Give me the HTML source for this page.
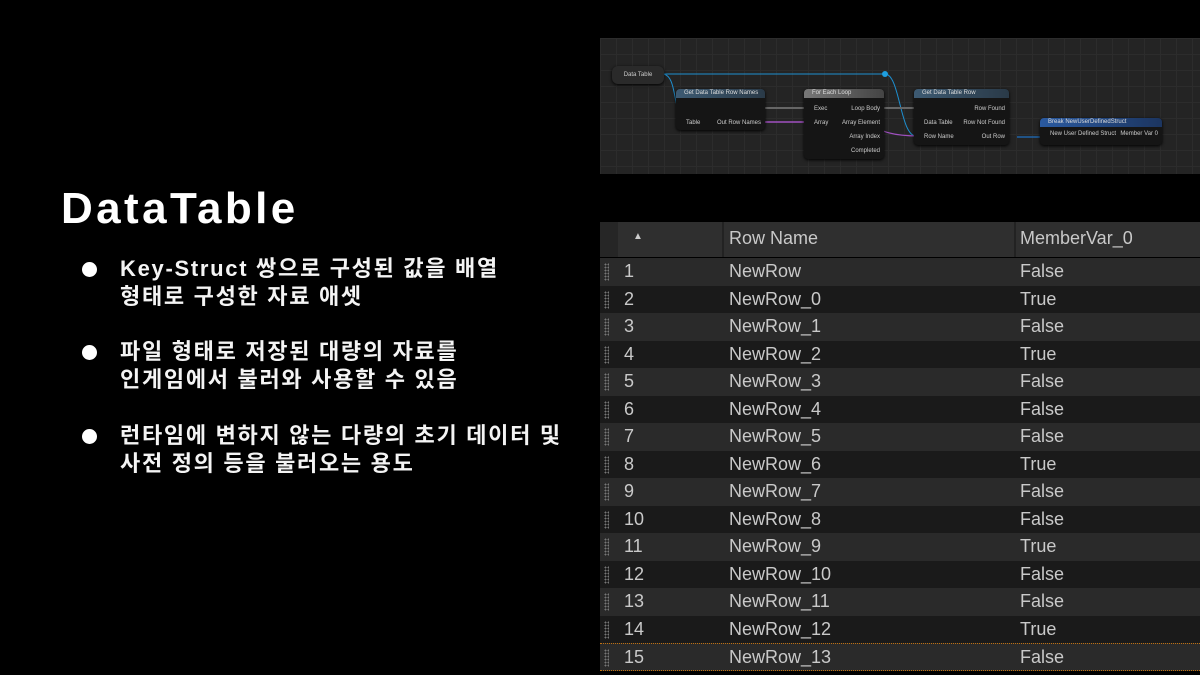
<!DOCTYPE html>
<html><head><meta charset="utf-8"><style>
*{margin:0;padding:0;box-sizing:border-box}
body{width:1200px;height:675px;background:#000;position:relative;overflow:hidden;font-family:"Liberation Sans","Noto Sans CJK KR",sans-serif;color:#fff}
h1{position:absolute;left:61px;top:184px;font-size:44px;font-weight:bold;letter-spacing:3.4px}
.b{position:absolute;left:120px;font-size:22px;line-height:28px;font-weight:bold;color:#f4f4f4;letter-spacing:1.7px;white-space:nowrap}
.dot{position:absolute;left:82px;width:15px;height:15px;border-radius:50%;background:#fff}
.g{position:absolute;left:600px;top:38px;width:600px;height:136px;background-color:#242424;background-image:linear-gradient(#2c2c2c 1px,transparent 1px),linear-gradient(90deg,#2c2c2c 1px,transparent 1px);background-size:16px 16px;overflow:hidden}
.n{position:absolute;background:#151515;border-radius:4px;box-shadow:0 1px 3px #000;font-size:6px;color:#ccc}
.n .h{height:9px;background:linear-gradient(90deg,#3d5a72,#2a3a48);border-radius:4px 4px 0 0;padding-left:8px;line-height:9px;color:#ddd}
.n .hg{background:linear-gradient(90deg,#777,#444)}
.n .hb{background:linear-gradient(90deg,#2a5aa0,#1c3560)}
.t{position:absolute;left:600px;top:222px;width:600px;height:453px;font-family:"Liberation Sans Narrow","Liberation Sans",sans-serif;font-size:18px;color:#c9c9c9}
.hd{position:absolute;top:0;left:0;width:600px;height:35px;background:#2f2f2f}
.r{position:absolute;left:0;width:600px;height:27.5px;line-height:27.5px}
.r span,.hd span{position:absolute}
.a{background:#2a2a2a}.c{background:#1a1a1a}
.r i{position:absolute;left:4px;top:5px;width:5px;height:18px;background-image:radial-gradient(#777 0.8px,transparent 1px);background-size:3px 3px}
.r .x{left:24px}.r .y{left:129px}.r .z{left:420px}
</style></head><body>
<h1>DataTable</h1>
<div class="dot" style="top:262px"></div>
<div class="b" style="top:255px">Key-Struct 쌍으로 구성된 값을 배열<br>형태로 구성한 자료 애셋</div>
<div class="dot" style="top:345px"></div>
<div class="b" style="top:338px">파일 형태로 저장된 대량의 자료를<br>인게임에서 불러와 사용할 수 있음</div>
<div class="dot" style="top:429px"></div>
<div class="b" style="top:422px">런타임에 변하지 않는 다량의 초기 데이터 및<br>사전 정의 등을 불러오는 용도</div>

<div class="g">
<svg width="600" height="136" style="position:absolute;left:0;top:0">
<path d="M62 36 C80 36 70 36 285 36 C300 36 300 98 316 98" stroke="#1e8fd0" fill="none" stroke-width="1"/>
<path d="M62 36 C80 36 70 84 90 84" stroke="#1e8fd0" fill="none"/>
<path d="M165 70 L206 70 M258 70 L318 70" stroke="#666" fill="none" stroke-width="2"/>
<path d="M165 84 L206 84" stroke="#a050c0" stroke-width="1.5"/>
<path d="M258 84 C275 84 275 98 318 98" stroke="#a050c0" fill="none" stroke-width="1.2"/>
<path d="M417 99 L440 99" stroke="#1e6fc0" stroke-width="1.2"/>
<circle cx="60" cy="36" r="2.5" fill="#1e9fe0"/><circle cx="285" cy="36" r="3" fill="#1e9fe0"/>
</svg>
<div class="n" style="left:12px;top:28px;width:52px;height:18px;border-radius:6px;background:#2a2a2a;text-align:center;line-height:18px">Data Table</div>
<div class="n" style="left:76px;top:51px;width:89px;height:41px"><div class="h">Get Data Table Row Names</div><div style="padding:4px 4px 0 10px;line-height:14px">&nbsp;<br>Table<span style="float:right">Out Row Names</span></div></div>
<div class="n" style="left:204px;top:51px;width:80px;height:70px"><div class="h hg">For Each Loop</div><div style="padding:4px 4px 0 10px;line-height:14px">Exec<span style="float:right">Loop Body</span><br>Array<span style="float:right">Array Element</span><br><span style="float:right">Array Index</span><br><span style="float:right">Completed</span></div></div>
<div class="n" style="left:314px;top:51px;width:95px;height:56px"><div class="h">Get Data Table Row</div><div style="padding:4px 4px 0 10px;line-height:14px">&nbsp;<span style="float:right">Row Found</span><br>Data Table<span style="float:right">Row Not Found</span><br>Row Name<span style="float:right">Out Row</span></div></div>
<div class="n" style="left:440px;top:80px;width:122px;height:27px"><div class="h hb">Break NewUserDefinedStruct</div><div style="padding:4px 4px 0 10px">New User Defined Struct<span style="float:right">Member Var 0</span></div></div>
</div>

<div class="t">
<div class="hd"><div style="position:absolute;left:0;top:0;width:18px;height:35px;background:#262626"></div><span style="left:33px;top:9px;font-size:10px;color:#ccc">▲</span><div style="position:absolute;left:122px;top:0;width:2px;height:35px;background:#222"></div><div style="position:absolute;left:414px;top:0;width:2px;height:35px;background:#222"></div><span style="left:129px;top:6px">Row Name</span><span style="left:420px;top:6px">MemberVar_0</span></div>
<div class="r a" style="top:36px"><i></i><span class="x">1</span><span class="y">NewRow</span><span class="z">False</span></div>
<div class="r c" style="top:63.5px"><i></i><span class="x">2</span><span class="y">NewRow_0</span><span class="z">True</span></div>
<div class="r a" style="top:91px"><i></i><span class="x">3</span><span class="y">NewRow_1</span><span class="z">False</span></div>
<div class="r c" style="top:118.5px"><i></i><span class="x">4</span><span class="y">NewRow_2</span><span class="z">True</span></div>
<div class="r a" style="top:146px"><i></i><span class="x">5</span><span class="y">NewRow_3</span><span class="z">False</span></div>
<div class="r c" style="top:173.5px"><i></i><span class="x">6</span><span class="y">NewRow_4</span><span class="z">False</span></div>
<div class="r a" style="top:201px"><i></i><span class="x">7</span><span class="y">NewRow_5</span><span class="z">False</span></div>
<div class="r c" style="top:228.5px"><i></i><span class="x">8</span><span class="y">NewRow_6</span><span class="z">True</span></div>
<div class="r a" style="top:256px"><i></i><span class="x">9</span><span class="y">NewRow_7</span><span class="z">False</span></div>
<div class="r c" style="top:283.5px"><i></i><span class="x">10</span><span class="y">NewRow_8</span><span class="z">False</span></div>
<div class="r a" style="top:311px"><i></i><span class="x">11</span><span class="y">NewRow_9</span><span class="z">True</span></div>
<div class="r c" style="top:338.5px"><i></i><span class="x">12</span><span class="y">NewRow_10</span><span class="z">False</span></div>
<div class="r a" style="top:366px"><i></i><span class="x">13</span><span class="y">NewRow_11</span><span class="z">False</span></div>
<div class="r c" style="top:393.5px"><i></i><span class="x">14</span><span class="y">NewRow_12</span><span class="z">True</span></div>
<div class="r a" style="top:421px;border-top:1px dotted #c07010;border-bottom:1px dotted #c07010"><i></i><span class="x">15</span><span class="y">NewRow_13</span><span class="z">False</span></div>
</div>
</body></html>
